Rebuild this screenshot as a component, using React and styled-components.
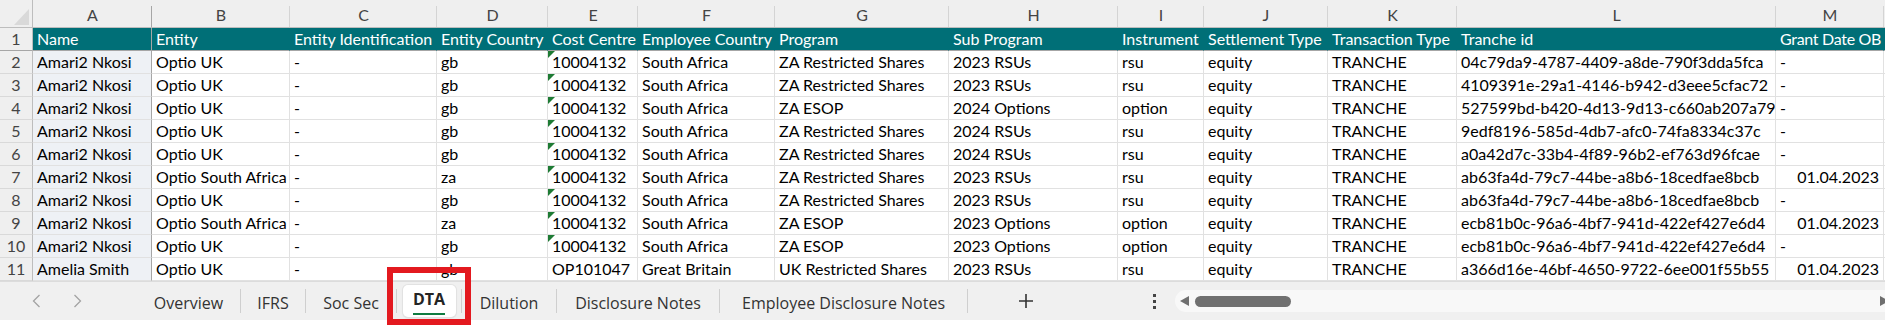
import React from "react";
import styled, { createGlobalStyle, css } from "styled-components";

const GlobalStyle = createGlobalStyle`
  html, body { margin: 0; padding: 0; background: #ffffff; overflow: hidden; }
  * { box-sizing: border-box; }
`;

const COLS = [
  { key: "A", w: 119 },
  { key: "B", w: 138 },
  { key: "C", w: 147 },
  { key: "D", w: 111 },
  { key: "E", w: 90 },
  { key: "F", w: 137 },
  { key: "G", w: 174 },
  { key: "H", w: 169 },
  { key: "I", w: 86 },
  { key: "J", w: 124 },
  { key: "K", w: 129 },
  { key: "L", w: 319 },
  { key: "M", w: 108 },
];

const HEADERS = [
  "Name",
  "Entity",
  "Entity Identification",
  "Entity Country",
  "Cost Centre",
  "Employee Country",
  "Program",
  "Sub Program",
  "Instrument",
  "Settlement Type",
  "Transaction Type",
  "Tranche id",
  "Grant Date OB",
];

const ROWS = [
  ["Amari2 Nkosi", "Optio UK", "-", "gb", "10004132", "South Africa", "ZA Restricted Shares", "2023 RSUs", "rsu", "equity", "TRANCHE", "04c79da9-4787-4409-a8de-790f3dda5fca", "-"],
  ["Amari2 Nkosi", "Optio UK", "-", "gb", "10004132", "South Africa", "ZA Restricted Shares", "2023 RSUs", "rsu", "equity", "TRANCHE", "4109391e-29a1-4146-b942-d3eee5cfac72", "-"],
  ["Amari2 Nkosi", "Optio UK", "-", "gb", "10004132", "South Africa", "ZA ESOP", "2024 Options", "option", "equity", "TRANCHE", "527599bd-b420-4d13-9d13-c660ab207a79", "-"],
  ["Amari2 Nkosi", "Optio UK", "-", "gb", "10004132", "South Africa", "ZA Restricted Shares", "2024 RSUs", "rsu", "equity", "TRANCHE", "9edf8196-585d-4db7-afc0-74fa8334c37c", "-"],
  ["Amari2 Nkosi", "Optio UK", "-", "gb", "10004132", "South Africa", "ZA Restricted Shares", "2024 RSUs", "rsu", "equity", "TRANCHE", "a0a42d7c-33b4-4f89-96b2-ef763d96fcae", "-"],
  ["Amari2 Nkosi", "Optio South Africa", "-", "za", "10004132", "South Africa", "ZA Restricted Shares", "2023 RSUs", "rsu", "equity", "TRANCHE", "ab63fa4d-79c7-44be-a8b6-18cedfae8bcb", "01.04.2023"],
  ["Amari2 Nkosi", "Optio UK", "-", "gb", "10004132", "South Africa", "ZA Restricted Shares", "2023 RSUs", "rsu", "equity", "TRANCHE", "ab63fa4d-79c7-44be-a8b6-18cedfae8bcb", "-"],
  ["Amari2 Nkosi", "Optio South Africa", "-", "za", "10004132", "South Africa", "ZA ESOP", "2023 Options", "option", "equity", "TRANCHE", "ecb81b0c-96a6-4bf7-941d-422ef427e6d4", "01.04.2023"],
  ["Amari2 Nkosi", "Optio UK", "-", "gb", "10004132", "South Africa", "ZA ESOP", "2023 Options", "option", "equity", "TRANCHE", "ecb81b0c-96a6-4bf7-941d-422ef427e6d4", "-"],
  ["Amelia Smith", "Optio UK", "-", "gb", "OP101047", "Great Britain", "UK Restricted Shares", "2023 RSUs", "rsu", "equity", "TRANCHE", "a366d16e-46bf-4650-9722-6ee001f55b55", "01.04.2023"],
];

const TABS = [
  { name: "Overview", w: 103 },
  { name: "IFRS", w: 64 },
  { name: "Soc Sec", w: 90 },
  { name: "DTA", w: 64, active: true },
  { name: "Dilution", w: 94 },
  { name: "Disclosure Notes", w: 162 },
  { name: "Employee Disclosure Notes", w: 247 },
];

const CELL_FONT = `Lato, "Liberation Sans", Arial, sans-serif`;
const UI_FONT = `"Open Sans", "Noto Sans", "Liberation Sans", sans-serif`;

const Page = styled.div`
  position: relative;
  width: 1885px;
  height: 325px;
  overflow: hidden;
  background: #ffffff;
`;

const Sheet = styled.div`
  display: grid;
  grid-template-columns: 33px ${COLS.map((c) => `${c.w}px`).join(" ")} 1fr;
  grid-template-rows: 28px;
  grid-auto-rows: 23px;
  width: 1885px;
  overflow: hidden;
`;

const Corner = styled.div`
  position: relative;
  background: #efefef;
  border-right: 1px solid #bdbdbd;
  border-bottom: 1px solid #bdbdbd;
  &::after {
    content: "";
    position: absolute;
    right: 3px;
    bottom: 2px;
    width: 0;
    height: 0;
    border-left: 15px solid transparent;
    border-bottom: 16px solid #d9d9d9;
  }
`;

const ColHead = styled.div`
  position: relative;
  background: #efefef;
  border-bottom: 1px solid #bdbdbd;
  color: #444444;
  font-family: ${CELL_FONT};
  font-size: 16px;
  line-height: 30px;
  text-align: center;
  &::after {
    content: "";
    position: absolute;
    top: 6px;
    right: 0;
    bottom: 0;
    width: 1px;
    background: ${(p) => (p.$frozen ? "#a6a6a6" : "#d4d4d4")};
  }
`;

const RowHead = styled.div`
  background: #efefef;
  border-right: 1px solid #bdbdbd;
  border-bottom: 1px solid ${(p) => (p.$frozen ? "#a6a6a6" : "#d9d9d9")};
  color: #444444;
  font-family: ${CELL_FONT};
  font-size: 16px;
  line-height: 22px;
  text-align: center;
`;

const Cell = styled.div`
  position: relative;
  background: ${(p) => (p.$frozen ? "#eef1f5" : "#ffffff")};
  border-right: 1px solid ${(p) => (p.$frozen ? "#a6a6a6" : "#e1e1e1")};
  border-bottom: 1px solid #e1e1e1;
  color: #000000;
  font-family: ${CELL_FONT};
  font-size: 16px;
  line-height: 22px;
  padding: 0 4px 0 4px;
  white-space: nowrap;
  overflow: hidden;
  text-align: ${(p) => (p.$right ? "right" : "left")};
  ${(p) =>
    p.$flag &&
    css`
      &::before {
        content: "";
        position: absolute;
        top: 0;
        left: 0;
        width: 0;
        height: 0;
        border-top: 7px solid #1e7b34;
        border-right: 7px solid transparent;
      }
    `}
`;

const HeadCell = styled(Cell)`
  background: #006f77;
  color: #ffffff;
  border-right-color: ${(p) => (p.$frozen ? "#a6a6a6" : "#006f77")};
  border-bottom: 1px solid #a6a6a6;
  letter-spacing: ${(p) => (p.$tight ? "-0.3px" : "normal")};
`;

const TabBar = styled.div`
  display: flex;
  align-items: center;
  height: 39px;
  background: #f0f0f0;
  border-top: 1px solid #dcdcdc;
`;

const Nav = styled.div`
  display: flex;
  align-items: center;
  gap: 32px;
  width: 137px;
  padding-left: 32px;
  flex-shrink: 0;
`;

const TabStrip = styled.div`
  display: flex;
  align-items: center;
  flex-shrink: 0;
`;

const Tab = styled.div`
  display: flex;
  align-items: center;
  justify-content: center;
  width: ${(p) => p.$w}px;
  height: 32px;
  font-family: ${UI_FONT};
  font-size: 16px;
  color: #333333;
  white-space: nowrap;
  padding-top: 3px;
`;

const ActiveBox = styled.div`
  display: flex;
  align-items: center;
  justify-content: center;
  width: 53px;
  height: 32px;
  background: #ffffff;
  border-radius: 5px;
  box-shadow: 0 0 0 1px #e2e2e2, 0 1px 2px rgba(0, 0, 0, 0.12);
  margin-top: -3px;
`;

const ActiveLabel = styled.span`
  position: relative;
  font-weight: 700;
  color: #242424;
  padding-bottom: 4px;
  &::after {
    content: "";
    position: absolute;
    left: 0;
    right: 0;
    bottom: -1px;
    height: 2px;
    background: #107c41;
  }
`;

const Sep = styled.div`
  width: 1px;
  height: 24px;
  background: #cfcfcf;
  flex-shrink: 0;
`;

const AddButton = styled.div`
  display: flex;
  align-items: center;
  margin-left: 51px;
  flex-shrink: 0;
`;

const Dots = styled.div`
  display: flex;
  flex-direction: column;
  gap: 3px;
  margin-left: 120px;
  flex-shrink: 0;
  & > span {
    width: 3px;
    height: 3px;
    background: #444444;
  }
`;

const Track = styled.div`
  flex: 1;
  display: flex;
  align-items: center;
  height: 22px;
  margin-left: 19px;
  padding-left: 5px;
  background: #f8f8f8;
  border-radius: 11px 0 0 11px;
`;

const Thumb = styled.div`
  width: 96px;
  height: 11px;
  margin-left: 6px;
  background: #707070;
  border-radius: 6px;
`;

const RightArrow = styled.div`
  margin-left: auto;
  margin-right: -4px;
  display: flex;
`;

const Highlight = styled.div`
  position: absolute;
  left: 387px;
  top: 267px;
  width: 84px;
  height: 58px;
  border: 6px solid #e3191f;
  pointer-events: none;
`;

const Chevron = ({ dir }) => (
  <svg width="9" height="14" viewBox="0 0 9 14">
    <polyline
      points={dir === "left" ? "7.5,1 1.5,7 7.5,13" : "1.5,1 7.5,7 1.5,13"}
      fill="none"
      stroke="#a3a3a3"
      strokeWidth="1.3"
    />
  </svg>
);

const Plus = () => (
  <svg width="14" height="14" viewBox="0 0 14 14">
    <path d="M7 0v14M0 7h14" stroke="#333" strokeWidth="1.6" />
  </svg>
);

const Triangle = ({ dir }) => (
  <svg width="9" height="10" viewBox="0 0 9 10">
    <polygon points={dir === "left" ? "9,0 0,5 9,10" : "0,0 9,5 0,10"} fill="#6f6f6f" />
  </svg>
);

export default function App() {
  return (
    <Page>
      <GlobalStyle />
      <Sheet>
        <Corner />
        {COLS.map((c, i) => (
          <ColHead key={c.key} $frozen={i === 0}>
            {c.key}
          </ColHead>
        ))}
        <ColHead />

        <RowHead $frozen>1</RowHead>
        {HEADERS.map((h, i) => (
          <HeadCell key={h} $frozen={i === 0} $tight={i === HEADERS.length - 1}>
            {h}
          </HeadCell>
        ))}
        <HeadCell />

        {ROWS.map((row, r) => (
          <React.Fragment key={r}>
            <RowHead>{r + 2}</RowHead>
            {row.map((v, i) => (
              <Cell
                key={i}
                $frozen={i === 0}
                $flag={i === 4 && /^\d+$/.test(v)}
                $right={i === 12 && v !== "-"}
              >
                {v}
              </Cell>
            ))}
            <Cell />
          </React.Fragment>
        ))}
      </Sheet>

      <TabBar>
        <Nav>
          <Chevron dir="left" />
          <Chevron dir="right" />
        </Nav>
        <TabStrip>
          {TABS.map((t, i) => (
            <React.Fragment key={t.name}>
              {i > 0 && <Sep />}
              <Tab $w={t.w}>
                {t.active ? (
                  <ActiveBox>
                    <ActiveLabel>{t.name}</ActiveLabel>
                  </ActiveBox>
                ) : (
                  t.name
                )}
              </Tab>
            </React.Fragment>
          ))}
          <Sep />
        </TabStrip>
        <AddButton>
          <Plus />
        </AddButton>
        <Dots>
          <span />
          <span />
          <span />
        </Dots>
        <Track>
          <Triangle dir="left" />
          <Thumb />
          <RightArrow>
            <Triangle dir="right" />
          </RightArrow>
        </Track>
      </TabBar>
      <Highlight />
    </Page>
  );
}
